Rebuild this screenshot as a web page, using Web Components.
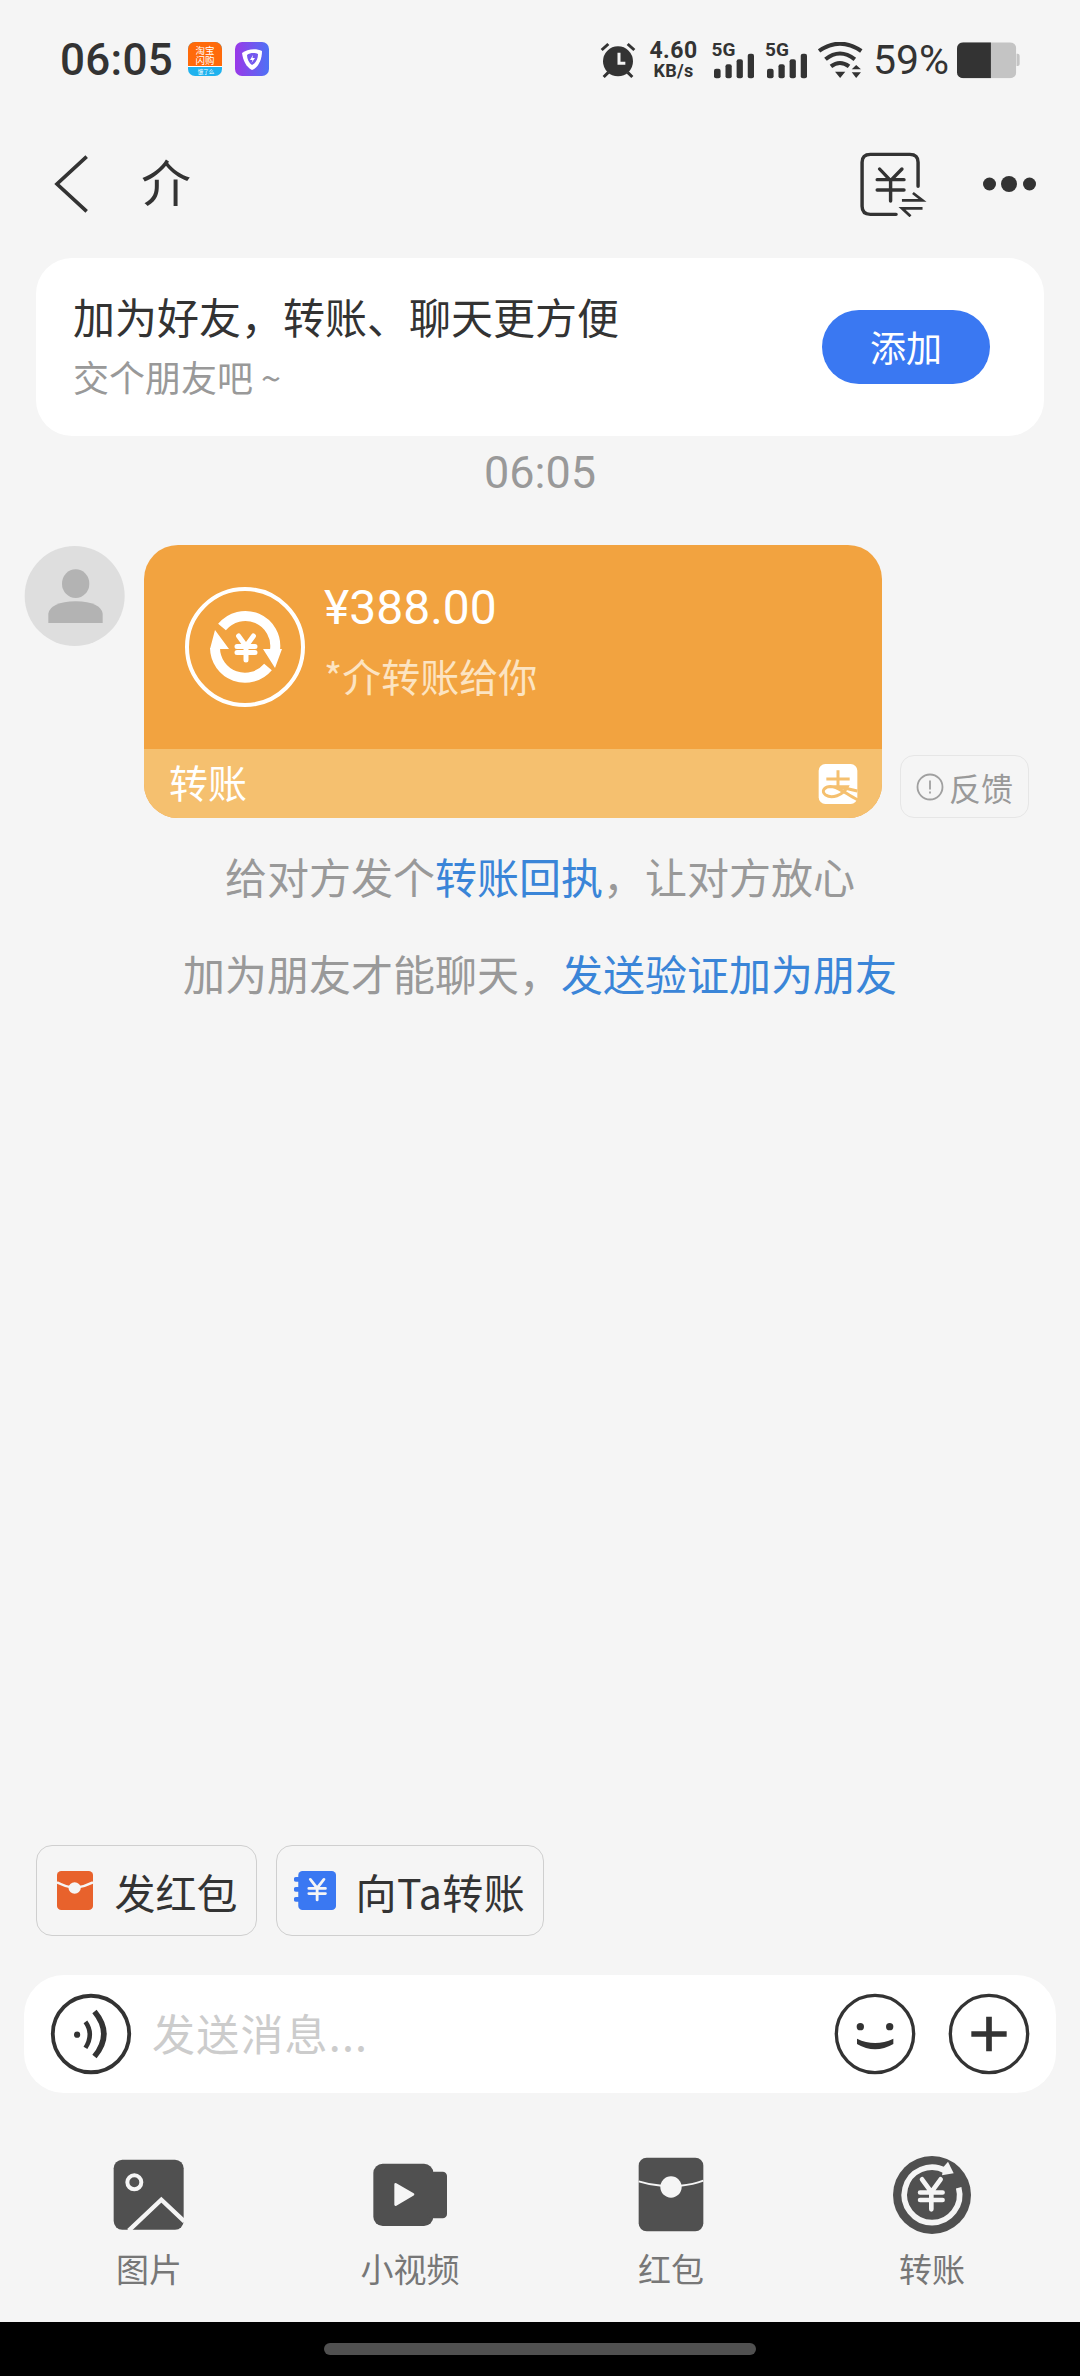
<!DOCTYPE html>
<html lang="zh"><head><meta charset="utf-8"><title>转账</title>
<style>
html,body{margin:0;padding:0;background:#f5f5f5}
body{width:1080px;height:2376px;overflow:hidden;font-family:"Noto Sans CJK SC","Noto Sans",sans-serif;color:#333}
chat-page{display:flex;flex-direction:column;height:2376px}
</style></head><body>
<chat-page>
<status-bar></status-bar>
<nav-bar title="介"></nav-bar>
<friend-card></friend-card>
<chat-time>06:05</chat-time>
<transfer-message amount="¥388.00" note="*介转账给你" label="转账"></transfer-message>
<notice-line style="margin-top:9px">给对方发个<a>转账回执</a>&#xFF0C;让对方放心</notice-line>
<notice-line>加为朋友才能聊天&#xFF0C;<a>发送验证加为朋友</a></notice-line>
<chip-row></chip-row>
<input-bar placeholder="发送消息..."></input-bar>
<tool-bar></tool-bar>
<home-bar></home-bar>
</chat-page>
<script>
function def(name, html){
  customElements.define(name, class extends HTMLElement{
    constructor(){super();this.attachShadow({mode:'open'});}
    connectedCallback(){this.shadowRoot.innerHTML=typeof html==='function'?html(this):html;}
  });
}
const F='"Noto Sans CJK SC","Noto Sans",sans-serif';
const R='Roboto,"Noto Sans",sans-serif';
const Y=(cx,cy,s,c,w)=>`<path d="M${cx-s*.62} ${cy-s} L${cx} ${cy-s*.15} L${cx+s*.62} ${cy-s} M${cx-s*.75} ${cy-s*.12} H${cx+s*.75} M${cx-s*.75} ${cy+s*.38} H${cx+s*.75} M${cx} ${cy-s*.15} V${cy+s}" fill="none" stroke="${c}" stroke-width="${w}" stroke-linecap="round"/>`;

def('status-bar',`<style>
:host{display:flex;height:100px;box-sizing:border-box;padding:42px 0 0 60px;align-items:flex-start;font-family:${R};color:#333}
.t{font-size:44px;font-weight:500;line-height:36px;width:128px;letter-spacing:.3px}
svg{display:block;flex:none}
.m{margin-left:13px}
.r{margin-left:auto;display:flex;align-items:flex-start;margin-right:60px}
.sp{display:flex;flex-direction:column;align-items:center;width:48px;margin-left:14px}
.sp b{font-size:23px;line-height:18px;font-weight:700;margin-top:0;letter-spacing:.5px}
.sp i{font-style:normal;font-size:18px;line-height:18px;margin-top:2px;font-weight:700;letter-spacing:.3px}
.pc{font-size:41px;line-height:36px;margin-left:10px;width:74px;font-weight:400;white-space:nowrap}
</style>
<div class="t">06:05</div>
<svg width="34" height="34" viewBox="0 0 34 34"><defs><clipPath id="c"><rect width="34" height="34" rx="7"/></clipPath></defs><g clip-path="url(#c)"><rect width="34" height="34" fill="#1fb2ee"/><rect width="34" height="25" fill="#ff6a0a"/><path d="M0 24.500 H34" stroke="#fff" stroke-width="1"/></g>
<text x="17" y="11.500" font-size="9.500" fill="#fff" text-anchor="middle" font-family='"Noto Sans CJK SC"'>淘宝</text><text x="17" y="21.500" font-size="9.500" fill="#fff" text-anchor="middle" font-family='"Noto Sans CJK SC"'>闪购</text><text x="18" y="32" font-size="5.500" fill="#fff" text-anchor="middle" font-family='"Noto Sans CJK SC"'>饿了么</text></svg>
<svg class="m" width="34" height="34" viewBox="0 0 34 34"><defs><linearGradient id="g" x1="0" x2="1"><stop offset="0" stop-color="#9a38e8"/><stop offset="1" stop-color="#4d72f5"/></linearGradient></defs><rect width="34" height="34" rx="7" fill="url(#g)"/><path d="M7 11 C12 7 21 6 27 9 C27 17 24 25 17 28 C11 25 8 18 7 11Z" fill="#fff"/><path d="M12 13 C15 10.500 20 10.500 23 12 C23 17 21 21 17 23 C14 21 12 17 12 13Z" fill="#7458ee"/><path d="M18 13 L15 18 H17.500 L16.500 21 L20 16 H17.500Z" fill="#fff"/></svg>
<div class="r">
<svg width="36" height="37" viewBox="172 125 108 111" preserveAspectRatio="none"><circle cx="226" cy="183" r="45" fill="#333"/><path d="M229 157V189H248" fill="none" stroke="#f5f5f5" stroke-width="9"/><path d="M177 149L197 131M275 149L255 131M183 230L197 216M269 230L255 216" stroke="#333" stroke-width="9" fill="none"/></svg>
<div class="sp"><b>4.60</b><i>KB/s</i></div>
<sig-nal style="margin-left:14px"></sig-nal><sig-nal style="margin-left:11.500px"></sig-nal>
<svg style="margin-left:11px" width="45" height="37" viewBox="808 125 132 111" preserveAspectRatio="none"><path d="M811 152Q872 108 935 152M830 177Q872 142 916 177M846 198Q872 178 899 198" fill="none" stroke="#333" stroke-width="12"/><path d="M858 214H888L873 233Z M907 207L920 194L934 207Z M907 216H934L920 233Z" fill="#333"/></svg>
<div class="pc">59%</div>
<svg width="63" height="37" viewBox="1212 125 184 111" preserveAspectRatio="none" style="margin-left:10px"><defs><clipPath id="b"><rect x="1212" y="126" width="173" height="108" rx="18"/></clipPath></defs><g clip-path="url(#b)"><rect x="1212" y="126" width="173" height="108" fill="#c4c4c4"/><rect x="1212" y="126" width="99" height="108" fill="#333"/></g><path d="M1386 160h3q6 0 6 6v25q0 6-6 6h-3z" fill="#c4c4c4"/></svg>
</div>`);

def('sig-nal',`<style>:host{display:block;position:relative;width:42px;height:37px}
span{position:absolute;left:0;top:-4px;font:700 19px/24px ${R};color:#333}
svg{position:absolute;left:2px;top:0}</style><span>5G</span>
<svg width="40" height="37" viewBox="508 125 115 111" preserveAspectRatio="none"><rect x="508" y="205" width="19" height="29" rx="6" fill="#333"/><rect x="541" y="192" width="18" height="42" rx="6" fill="#333"/><rect x="573" y="177" width="18" height="57" rx="6" fill="#333"/><rect x="605" y="160" width="18" height="74" rx="6" fill="#333"/></svg>`);

def('nav-bar',h=>`<style>
:host{display:flex;height:158px;box-sizing:border-box;padding-top:8px;align-items:center}
.b{margin-left:52px;display:block}
h1{margin:-6px 0 0 53px;font:400 50px/60px ${F};color:#333}
.a{margin-left:auto;display:block}
.d{margin:0 44px 0 56px;display:block}
</style>
<svg class="b" width="36" height="60" viewBox="150 465 108 180"><path d="M254 476L165 558L254 640" fill="none" stroke="#333" stroke-width="11"/></svg>
<h1>${h.getAttribute('title')||''}</h1>
<svg class="a" width="68" height="66" viewBox="925 456 198 198" preserveAspectRatio="none" style="margin-top:2px"><path d="M1097 562V490Q1097 466 1073 466H958Q934 466 934 490V622Q934 646 958 646H1033" fill="none" stroke="#333" stroke-width="10" stroke-linecap="round"/><path d="M985 510L1017 545L1050 510M978 542H1056M978 573H1056M1017 545V606" fill="none" stroke="#333" stroke-width="10" stroke-linecap="round"/><path d="M1050 604H1110L1082 582M1110 628H1050L1075 652" fill="none" stroke="#333" stroke-width="8"/></svg>
<svg class="d" width="53" height="16" viewBox="0 0 53 16" style="margin-top:2px"><circle cx="6.500" cy="8" r="6.500" fill="#333"/><circle cx="26" cy="8" r="8" fill="#333"/><circle cx="46.500" cy="8" r="6.500" fill="#333"/></svg>`);

def('friend-card',`<style>
:host{display:flex;align-items:center;justify-content:space-between;height:178px;margin:0 36px;box-sizing:border-box;padding:0 54px 0 37px;background:#fff;border-radius:36px}
.l{display:flex;flex-direction:column;gap:7px;margin-top:-10px}
.a{font:400 42px/60px ${F};color:#333;white-space:nowrap}
.s{font:400 36px/46px ${F};color:#999}
.btn{width:168px;height:74px;border-radius:37px;background:#3a78f2;color:#fff;font:400 36px/72px ${F};text-align:center}
</style><div class="l"><div class="a">加为好友&#xFF0C;转账、聊天更方便</div><div class="s">交个朋友吧 ~</div></div><div class="btn">添加</div>`);

def('chat-time',`<style>:host{display:block;height:74px;text-align:center;font:400 45px/74px ${R};color:#999}</style><slot></slot>`);

def('transfer-message',h=>`<style>
:host{display:flex;align-items:flex-end;margin-top:35px;padding-left:24px}
.av{display:block;align-self:flex-start;flex:none}
.bub{width:738px;height:273px;margin-left:18px;border-radius:34px;overflow:hidden;background:#f2a340;display:flex;flex-direction:column;flex:none}
.top{flex:1;display:flex;align-items:flex-start}
.ic{margin:42px 0 0 41px;display:block;flex:none}
.tx{margin:33px 0 0 19px}
.am{font:400 48px/60px ${R};color:#fff}
.no{font:400 39px/50px ${F};color:#fce4c2;margin-top:12px}
.ft{height:69px;background:#f5c06f;display:flex;align-items:center;justify-content:space-between;padding:0 24px 0 25px;color:#fff;font:400 39px/50px ${F}}
.ft span{margin-top:-6px}
.fb{margin-left:18px;width:129px;height:63px;box-sizing:border-box;border:1.500px solid #e6e6e6;border-radius:14px;display:flex;align-items:center;justify-content:center;gap:5px;color:#999;font:400 32px/40px ${F}}
.fb svg{display:block}
</style>
<svg class="av" width="102" height="102" viewBox="66 44 306 306"><circle cx="218" cy="197" r="150" fill="#dedede"/><ellipse cx="221" cy="160" rx="41" ry="43" fill="#b3b3b3"/><path d="M139 278V250Q145 215 221 213Q297 215 302 250V278Z" fill="#b3b3b3"/></svg>
<div class="bub"><div class="top">
<svg class="ic" width="120" height="120" viewBox="-60 -60 120 120"><circle r="58" fill="none" stroke="#fff" stroke-width="4"/><path d="M-23 -20A30 30 0 0 1 30 3M-30 1A30 30 0 0 0 23 20" fill="none" stroke="#fff" stroke-width="10"/><path d="M-30 -17L-16 2H-35Z M18 2H37L30 21Z" fill="#fff"/>${Y(1,1,12,'#fff',5)}</svg>
<div class="tx"><div class="am">${h.getAttribute('amount')||''}</div><div class="no">${h.getAttribute('note')||''}</div></div>
</div><div class="ft"><span>${h.getAttribute('label')||''}</span>
<svg width="40" height="40" viewBox="807 188 116 120"><rect x="807" y="188" width="116" height="120" rx="20" fill="#fff"/><path d="M830 233H900M865 207V256M842 256H893C880 284 845 292 828 281C812 270 825 252 850 256C875 262 895 282 923 295M868 256L923 269" fill="none" stroke="#f5c06f" stroke-width="9"/></svg>
</div></div>
<div class="fb"><svg width="28" height="28" viewBox="0 0 28 28"><circle cx="14" cy="14" r="12.500" fill="none" stroke="#a0a0a0" stroke-width="1.800"/><path d="M14 7.500V16.500M14 18.500V20.500" stroke="#a0a0a0" stroke-width="1.800"/></svg><span>反馈</span></div>`);

def('notice-line',`<style>:host{display:block;height:97px;text-align:center;font:400 42px/97px ${F};color:#999}
::slotted(a){color:#3a85d8}</style><slot></slot>`);

def('chip-row',`<style>:host{display:flex;gap:19px;margin-top:auto;padding-left:36px;height:91px}
.c{display:flex;align-items:center;box-sizing:border-box;height:91px;border:1.500px solid #cfcfcf;border-radius:16px;font:400 41px/56px ${F};color:#333;white-space:nowrap}
svg{display:block;flex:none}
</style>
<div class="c" style="width:221px;padding-left:19.500px"><svg width="36" height="39" viewBox="160 152 100 117" preserveAspectRatio="none"><rect x="160" y="152" width="100" height="117" rx="12" fill="#e8622c"/><path d="M160 186Q185 200 209 203Q235 200 260 186" fill="none" stroke="#f5f5f5" stroke-width="7"/><circle cx="209" cy="203" r="17" fill="#f5f5f5"/></svg><span style="margin-left:22px">发红包</span></div>
<div class="c" style="width:268px;padding-left:16.500px"><svg width="42" height="39" viewBox="823 152 118 117" preserveAspectRatio="none"><rect x="835" y="152" width="106" height="117" rx="12" fill="#3a78f2"/><path d="M829 170h10v14h-10a6 6 0 0 1-6-7a6 6 0 0 1 6-7zM829 200h10v14h-10a6 6 0 0 1-6-7a6 6 0 0 1 6-7zM829 230h10v14h-10a6 6 0 0 1-6-7a6 6 0 0 1 6-7z" fill="#3a78f2"/>${Y(888,208,31,'#f5f5f5',8)}</svg><span style="margin-left:20px;letter-spacing:.5px">向Ta转账</span></div>`);

def('input-bar',h=>`<style>:host{display:flex;align-items:center;height:118px;margin:39px 24px 0 24px;background:#fff;border-radius:40px;box-sizing:border-box;padding:0 0 0 26px}
svg{display:block;flex:none}
.p{font:400 43px/60px ${F};color:#ccc;margin-left:20px;flex:1;margin-top:-4px;letter-spacing:1.2px}
</style>
<svg width="82" height="82" viewBox="138 522 236 236"><circle cx="256" cy="640" r="110" fill="none" stroke="#333" stroke-width="11"/><circle cx="216" cy="642" r="9" fill="#333"/><path d="M240 605Q265 640 240 680" fill="none" stroke="#333" stroke-width="13"/><path d="M266 575Q320 640 266 705" fill="none" stroke="#333" stroke-width="16"/></svg>
<div class="p">${h.getAttribute('placeholder')||''}</div>
<svg width="82" height="82" viewBox="160 95 246 246"><circle cx="283" cy="218" r="116" fill="none" stroke="#333" stroke-width="10"/><circle cx="239" cy="196" r="11" fill="#333"/><circle cx="327" cy="196" r="11" fill="#333"/><path d="M229 232Q283 258 338 232V248Q283 280 229 248Z" fill="#333"/></svg>
<svg width="82" height="82" viewBox="502 97 246 246" style="margin:0 26px 0 32px"><circle cx="625" cy="220" r="116" fill="none" stroke="#333" stroke-width="10"/><path d="M572 220H678M625 168V272" stroke="#333" stroke-width="17" fill="none"/></svg>`);

const tool=(label,svg)=>`<div class="t"><div class="i">${svg}</div><span>${label}</span></div>`;
def('tool-bar',`<style>:host{display:grid;grid-template-columns:repeat(4,261px);padding:60px 0 0 18px;height:229px;box-sizing:border-box}
.t{display:flex;flex-direction:column;align-items:center}
.i{height:84px;display:flex;align-items:center;justify-content:center}
svg{display:block}
span{font:400 33px/44px ${F};color:#777;margin-top:9px;padding-left:1px}
</style>
${tool('图片',`<svg width="74" height="74" viewBox="155 85 222 222"><rect x="160" y="90" width="210" height="210" rx="26" fill="#505050"/><circle cx="222" cy="158" r="21" fill="none" stroke="#f5f5f5" stroke-width="12"/><path d="M205 303L303 210L372 275" fill="none" stroke="#f5f5f5" stroke-width="13"/></svg>`)}
${tool('小视频',`<svg width="76" height="66" viewBox="933 98 228 198"><rect x="937" y="103" width="180" height="187" rx="28" fill="#505050"/><rect x="1100" y="127" width="58" height="140" rx="13" fill="#505050"/><path d="M1004 165L1056 195L1004 226Z" fill="#f5f5f5" stroke="#f5f5f5" stroke-width="8" stroke-linejoin="round"/></svg>`)}
${tool('红包',`<svg width="66" height="76" viewBox="169 82 198 228"><rect x="171" y="84" width="194" height="221" rx="24" fill="#505050"/><path d="M171 155Q205 166 240 168M296 168Q335 165 365 153" fill="none" stroke="#f5f5f5" stroke-width="6"/><circle cx="268" cy="172" r="32" fill="#f5f5f5"/></svg>`)}
${tool('转账',`<svg width="80" height="80" viewBox="935 77 240 240"><circle cx="1055" cy="197" r="117" fill="#505050"/><path d="M1135 175A83 83 0 1 1 1095 124" fill="none" stroke="#f5f5f5" stroke-width="17"/><path d="M1090 112L1103 97L1120 132L1085 138Z" fill="#f5f5f5"/>${Y(1053,195,45,'#f5f5f5',14)}</svg>`)}`);

def('home-bar',`<style>:host{display:flex;align-items:center;justify-content:center;height:54px;background:#000}
i{display:block;width:432px;height:12px;border-radius:6px;background:#505050}</style><i></i>`);
</script>
</body></html>
